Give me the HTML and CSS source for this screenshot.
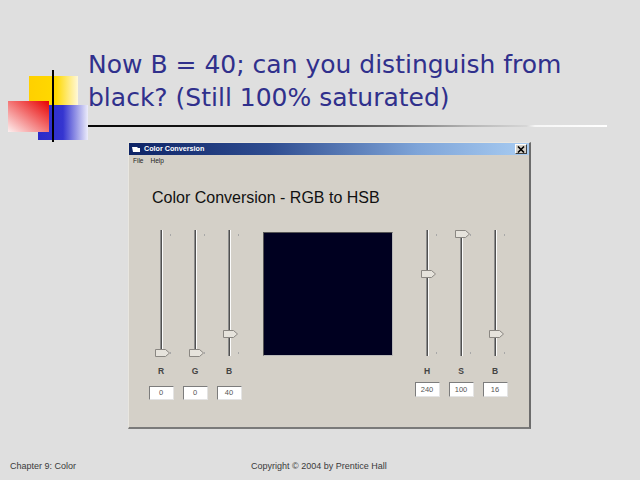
FILE: index.html
```html
<!DOCTYPE html>
<html lang="en">
<head>
<meta charset="utf-8">
<title>Now B = 40</title>
<link rel="stylesheet" href="styles.css">
</head>
<body>
<div class="slide">
  <svg class="logo" width="100" height="90" viewBox="0 0 100 90" aria-hidden="true">
    <defs>
      <linearGradient id="gy" x1="0" y1="0" x2="1" y2="0">
        <stop offset="0" stop-color="#ffd000"/>
        <stop offset="0.55" stop-color="#ffd900"/>
        <stop offset="1" stop-color="#fff8d8"/>
      </linearGradient>
      <linearGradient id="gb" x1="0" y1="0" x2="1" y2="0">
        <stop offset="0" stop-color="#2a2ac8"/>
        <stop offset="0.5" stop-color="#3535d0"/>
        <stop offset="1" stop-color="#ececfa"/>
      </linearGradient>
      <linearGradient id="gr" x1="1" y1="0" x2="0" y2="1">
        <stop offset="0" stop-color="#e80000"/>
        <stop offset="0.45" stop-color="#f26a6a"/>
        <stop offset="1" stop-color="#fdf0f0"/>
      </linearGradient>
    </defs>
    <rect x="29" y="16" width="49" height="31" fill="url(#gy)"/>
    <rect x="38" y="45" width="50" height="35" fill="url(#gb)"/>
    <rect x="8" y="41" width="41" height="31" fill="url(#gr)"/>
    <rect x="52" y="10" width="2" height="72" fill="#000"/>
  </svg>

  <h1 class="title">Now B = 40; can you distinguish from<br>black? (Still 100% saturated)</h1>
  <div class="rule"></div>

  <div class="window">
    <div class="titlebar">
      <svg class="app-icon" width="8" height="7" viewBox="0 0 8 7" aria-hidden="true">
        <path d="M0 1h5l1 1h2v4H1z" fill="#fff"/>
      </svg>
      <span class="titlebar-text">Color Conversion</span>
      <span class="close-btn">
        <svg width="8" height="7" viewBox="0 0 8 7" aria-hidden="true">
          <path d="M1 0.5l6 6M7 0.5l-6 6" stroke="#000" stroke-width="1.6"/>
        </svg>
      </span>
    </div>
    <div class="menubar"><span>File</span><span>Help</span></div>
    <div class="heading">Color Conversion - RGB to HSB</div>

    <div class="controls">
      <div class="group">
        <div class="channel">
          <div class="track"><span class="tick tick-top"></span><span class="tick tick-bottom"></span>
            <svg class="thumb" style="top:119px" width="15" height="8" viewBox="0 0 15 8"><path d="M0.5 0.5h10l4 3.5-4 3.5h-10z" fill="#e6e3dc" stroke="#8a8782"/></svg>
          </div>
          <div class="label">R</div>
          <div class="field">0</div>
        </div>
        <div class="channel">
          <div class="track"><span class="tick tick-top"></span><span class="tick tick-bottom"></span>
            <svg class="thumb" style="top:119px" width="15" height="8" viewBox="0 0 15 8"><path d="M0.5 0.5h10l4 3.5-4 3.5h-10z" fill="#e6e3dc" stroke="#8a8782"/></svg>
          </div>
          <div class="label">G</div>
          <div class="field">0</div>
        </div>
        <div class="channel">
          <div class="track"><span class="tick tick-top"></span><span class="tick tick-bottom"></span>
            <svg class="thumb" style="top:100px" width="15" height="8" viewBox="0 0 15 8"><path d="M0.5 0.5h10l4 3.5-4 3.5h-10z" fill="#e6e3dc" stroke="#8a8782"/></svg>
          </div>
          <div class="label">B</div>
          <div class="field">40</div>
        </div>
      </div>

      <div class="swatch"></div>

      <div class="group group-hsb">
        <div class="channel">
          <div class="track"><span class="tick tick-top"></span><span class="tick tick-bottom"></span>
            <svg class="thumb" style="top:40px" width="15" height="8" viewBox="0 0 15 8"><path d="M0.5 0.5h10l4 3.5-4 3.5h-10z" fill="#e6e3dc" stroke="#8a8782"/></svg>
          </div>
          <div class="label">H</div>
          <div class="field">240</div>
        </div>
        <div class="channel">
          <div class="track"><span class="tick tick-top"></span><span class="tick tick-bottom"></span>
            <svg class="thumb" style="top:0px" width="15" height="8" viewBox="0 0 15 8"><path d="M0.5 0.5h10l4 3.5-4 3.5h-10z" fill="#e6e3dc" stroke="#8a8782"/></svg>
          </div>
          <div class="label">S</div>
          <div class="field">100</div>
        </div>
        <div class="channel">
          <div class="track"><span class="tick tick-top"></span><span class="tick tick-bottom"></span>
            <svg class="thumb" style="top:100px" width="15" height="8" viewBox="0 0 15 8"><path d="M0.5 0.5h10l4 3.5-4 3.5h-10z" fill="#e6e3dc" stroke="#8a8782"/></svg>
          </div>
          <div class="label">B</div>
          <div class="field">16</div>
        </div>
      </div>
    </div>
  </div>

  <div class="footer">
    <span class="footer-left">Chapter 9: Color</span>
    <span class="footer-center">Copyright © 2004 by Prentice Hall</span>
  </div>
</div>
</body>
</html>
```

FILE: styles.css
```css
* { box-sizing: border-box; }

html, body {
  margin: 0;
  padding: 0;
  background: #dfdfdf;
}

.slide {
  position: relative;
  width: 640px;
  height: 480px;
  background: #dfdfdf;
  display: flex;
  flex-direction: column;
  font-family: "Liberation Sans", Arial, sans-serif;
  overflow: hidden;
}

.logo {
  position: absolute;
  left: 0;
  top: 60px;
}

.title {
  margin: 0;
  padding: 48px 0 0 88px;
  font-family: "DejaVu Sans", Verdana, sans-serif;
  font-weight: normal;
  font-size: 25px;
  line-height: 33px;
  color: #30308c;
  position: relative;
}

.rule {
  margin: 11px 0 0 31px;
  width: 576px;
  height: 2px;
  background: linear-gradient(to right, #000 0%, #1a1a1a 40%, #6a6a6a 62%, #b5b5b5 76%, #d6d6d6 86%, #f6f6f6 87.5%, #ffffff 100%);
}

.window {
  margin: 15px 0 0 128px;
  width: 403px;
  height: 287px;
  background: #d4d0c8;
  border-top: 1px solid #e8e6e0;
  border-left: 1px solid #e8e6e0;
  border-right: 2px solid #6c6c6c;
  border-bottom: 2px solid #7a7a7a;
  display: flex;
  flex-direction: column;
}

.titlebar {
  height: 12px;
  display: flex;
  align-items: center;
  padding: 0 2px 0 3px;
  background: linear-gradient(to right, #0e2466 0%, #2e4c90 35%, #7ea4d8 72%, #a8ccf2 100%);
}

.app-icon { flex: none; }

.titlebar-text {
  margin-left: 4px;
  font-family: "Liberation Sans", Arial, sans-serif;
  font-weight: bold;
  font-size: 7.2px;
  color: #fff;
  line-height: 12px;
}

.close-btn {
  margin-left: auto;
  width: 12px;
  height: 10px;
  background: #d4d0c8;
  border: 1px solid;
  border-color: #fff #404040 #404040 #fff;
  display: flex;
  align-items: center;
  justify-content: center;
}

.menubar {
  height: 12px;
  display: flex;
  gap: 7px;
  padding-left: 4px;
  font-size: 6.5px;
  line-height: 12px;
  color: #222;
}

.heading {
  margin: 22px 0 0 23px;
  font-size: 16px;
  line-height: 18px;
  color: #111;
}

.controls {
  margin-top: 23px;
  padding-left: 15px;
  display: flex;
  align-items: flex-start;
}

.group { display: flex; }

.channel {
  width: 34px;
  display: flex;
  flex-direction: column;
  align-items: center;
}

.track {
  position: relative;
  width: 3px;
  height: 126px;
  border-left: 1px solid #8c8c8c;
  border-right: 1px solid #fbfbfb;
  background: #505050;
}

.tick {
  position: absolute;
  left: 9px;
  width: 1px;
  height: 2px;
  background: #a8a8a8;
}

.tick-top { top: 4px; }
.tick-bottom { top: 122px; }

.thumb {
  position: absolute;
  left: -6px;
}

.label {
  margin-top: 10px;
  font-size: 8.5px;
  line-height: 10px;
  font-weight: bold;
  color: #444;
}

.field {
  margin-top: 10px;
  width: 25px;
  height: 14px;
  background: #fff;
  border: 1px solid;
  border-color: #7c7c7c #e4e4e4 #e4e4e4 #7c7c7c;
  font-size: 7.5px;
  line-height: 12px;
  text-align: center;
  color: #555;
}

.group-hsb .field {
  margin-top: 6px;
  height: 15px;
  line-height: 13px;
}

.swatch {
  margin: 2px 0 0 17px;
  width: 130px;
  height: 124px;
  background: #000020;
  border: 1px solid #9a9a9a;
  border-color: #555 #b8b8b8 #b8b8b8 #555;
}

.group-hsb { margin-left: 17px; }

.footer {
  margin-top: auto;
  padding: 0 0 8px 10px;
  display: flex;
  font-size: 9px;
  line-height: 11px;
  color: #3a3a3a;
}

.footer-left { width: 241px; }
```
